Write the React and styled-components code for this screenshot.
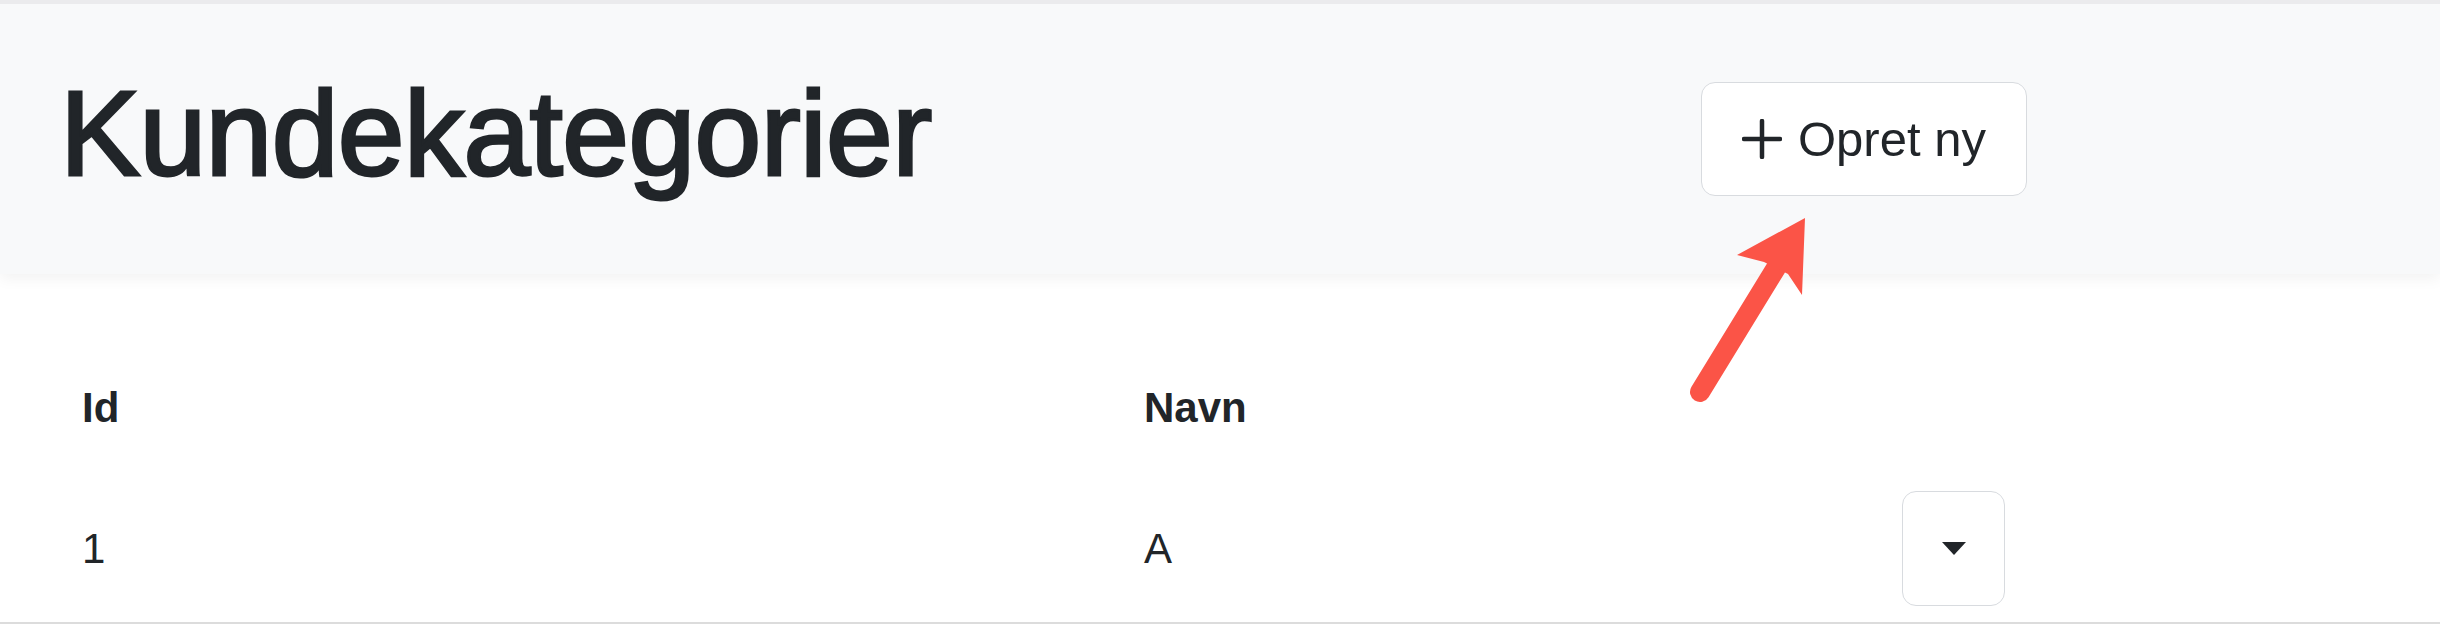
import React from 'react';
import styled, { createGlobalStyle } from 'styled-components';

const GlobalStyle = createGlobalStyle`
  html, body {
    margin: 0;
    padding: 0;
    background: #ffffff;
  }
  body {
    font-family: "Liberation Sans", Helvetica, Arial, sans-serif;
    color: #212529;
  }
  * {
    box-sizing: border-box;
  }
`;

const Page = styled.div`
  position: relative;
  width: 2440px;
  height: 624px;
  overflow: hidden;
  background: #ffffff;
  border-bottom: 2px solid #dcdcdc;
`;

const Header = styled.header`
  position: relative;
  z-index: 1;
  display: grid;
  grid-template-columns: 1641px auto;
  align-items: center;
  height: 274px;
  padding-left: 60px;
  background: #f8f9fa;
  border-top: 4px solid #ebebed;
  box-shadow: 0 5px 14px rgba(0, 0, 0, 0.05);
`;

const Title = styled.h1`
  margin: 0 0 12px;
  font-size: 120px;
  font-weight: 500;
  line-height: 1.2;
  color: #212529;
  -webkit-text-stroke: 3px #212529;
  letter-spacing: -0.6px;
`;

const OutlineButton = styled.button`
  display: inline-flex;
  align-items: center;
  justify-content: center;
  gap: ${(p) => p.$gap || 0}px;
  height: ${(p) => p.$height || 114}px;
  padding: 0 ${(p) => p.$padX || 40}px;
  background: #ffffff;
  border: 1px solid #d8dbdf;
  border-radius: 14px;
  font-family: "Liberation Sans", Helvetica, Arial, sans-serif;
  font-size: 49px;
  color: #212529;
  cursor: pointer;
`;

const Caret = styled.span`
  display: block;
  width: 0;
  height: 0;
  border-top: 13px solid #212529;
  border-left: 12.5px solid transparent;
  border-right: 12.5px solid transparent;
`;

const Table = styled.div`
  margin-top: 78px;
  padding: 0 60px;
`;

const Row = styled.div`
  display: grid;
  grid-template-columns: 1062px 758px 1fr;
  align-items: center;
`;

const Cell = styled.div`
  padding: ${(p) => (p.$head ? '24px 22px' : '28px 22px 20px')};
  font-size: 42px;
  line-height: 63px;
  font-weight: ${(p) => (p.$head ? 700 : 400)};
  color: #212529;
`;

const Arrow = styled.svg`
  position: absolute;
  left: 1680px;
  top: 200px;
  z-index: 2;
  pointer-events: none;
`;

const PlusIcon = () => (
  <svg width="40" height="40" viewBox="0 0 40 40">
    <path d="M20 2 V38 M2 20 H38" stroke="#212529" strokeWidth="4.5" strokeLinecap="round" fill="none" />
  </svg>
);

const rows = [{ id: 1, name: 'A' }];

export default function App() {
  return (
    <>
      <GlobalStyle />
      <Page>
        <Header>
          <Title>Kundekategorier</Title>
          <div>
            <OutlineButton $gap={16}>
              <PlusIcon />
              <span>Opret ny</span>
            </OutlineButton>
          </div>
        </Header>

        <Table>
          <Row>
            <Cell $head>Id</Cell>
            <Cell $head>Navn</Cell>
            <Cell $head />
          </Row>
          {rows.map((r) => (
            <Row key={r.id}>
              <Cell>{r.id}</Cell>
              <Cell>{r.name}</Cell>
              <Cell>
                <OutlineButton $padX={0} $height={115} style={{ width: 103 }} aria-label="Handlinger">
                  <Caret />
                </OutlineButton>
              </Cell>
            </Row>
          ))}
        </Table>

        <Arrow width="150" height="220" viewBox="0 0 150 220">
          <line x1="20" y1="192" x2="96" y2="68" stroke="#fb5447" strokeWidth="20" strokeLinecap="round" />
          <polygon points="125,18 122,95 108,74 84,62 57,55" fill="#fb5447" />
        </Arrow>
      </Page>
    </>
  );
}
